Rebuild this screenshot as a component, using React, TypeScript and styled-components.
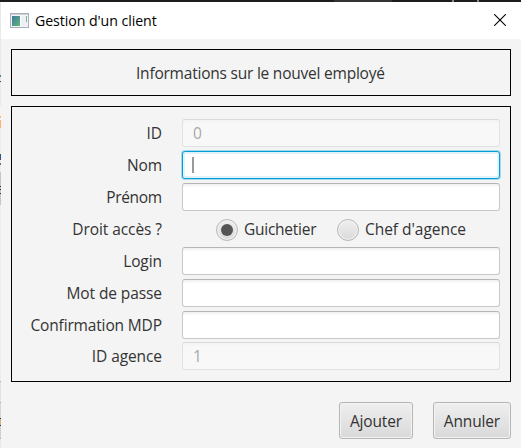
import React from "react";
import styled, { createGlobalStyle, css } from "styled-components";

const GlobalStyle = createGlobalStyle`
  * { box-sizing: border-box; }
  html, body { margin: 0; padding: 0; }
  body { overflow: hidden; background: #f4f4f4; }
`;

const Screen = styled.div`
  width: 521px;
  height: 448px;
  display: grid;
  grid-template: 2px 1fr / 1px 1fr;
  font-family: "Open Sans", "Segoe UI", sans-serif;
  font-size: 15.5px;
  line-height: 20px;
  color: #333;
`;

const TopEdge = styled.div`
  grid-column: 1 / 3;
  background: linear-gradient(
    90deg,
    #1f1c1f 334px,
    #353335 334px 392px,
    #1f1c1f 392px 452px,
    #8b898b 452px 454px,
    #1f1c1f 454px 477px,
    #8b898b 477px 479px,
    #1f1c1f 479px
  );
`;

const LeftEdge = styled.div`
  background: linear-gradient(
    #e9e9e9 73px,
    #4d80a0 73px 75px,
    #e9e9e9 75px 79px,
    #444 79px 80px,
    #e9e9e9 80px 104px,
    #f4f4f4 104px 114px,
    #ffb870 114px 116px,
    #f4f4f4 116px 118px,
    #ffb46b 118px 126px,
    #ececec 126px 152px,
    #753c35 152px 153px,
    #225c9d 153px 157px,
    #753c35 157px 158px,
    #ececec 158px 161px,
    #8c5b70 161px 163px,
    #ececec 163px 170px,
    #c6c6c6 170px 184px,
    #333 184px 185px,
    #c6c6c6 185px 187px,
    #333 187px 188px,
    #c6c6c6 188px 191px,
    #333 191px 192px,
    #c6c6c6 192px 203px,
    #ededed 203px 379px,
    #aaa 379px 380px,
    #e2e2e2 380px 400px,
    #aaa 400px 401px,
    #d7d7d7 401px 416px,
    #333 416px 417px,
    #d4b57d 417px 423px,
    #333 423px 424px,
    #d0d0d0 424px 436px,
    #aaa 436px 437px,
    #e9e9e9 437px
  );
`;

const Dialog = styled.main`
  display: flex;
  flex-direction: column;
  background: #f4f4f4;
`;

const TitleBar = styled.header`
  height: 37px;
  padding: 0 15px 0 9px;
  display: flex;
  align-items: center;
  background: #fff;
  color: #000;
`;

const Title = styled.h1`
  flex: 1;
  margin: 0 0 0 5px;
  font-size: 14.2px;
  font-weight: 400;
  line-height: 20px;
`;

const CloseButton = styled.button`
  width: 12px;
  height: 12px;
  margin-top: -2px;
  padding: 0;
  border: 0;
  background: none;
  svg { display: block; }
`;

const Content = styled.div`
  flex: 1;
  padding: 10px;
  display: flex;
  flex-direction: column;
`;

const Banner = styled.section`
  height: 47px;
  padding-right: 1px;
  border: 1px solid #000;
  display: flex;
  align-items: center;
  justify-content: center;
`;

const Form = styled.form`
  height: 276px;
  margin-top: 10px;
  padding: 12px 10px 0;
  border: 1px solid #000;
  display: grid;
  grid-template-columns: 140px 318px;
  grid-template-rows: repeat(6, 29px) 28px 28px;
  row-gap: 3px;
  column-gap: 20px;
`;

const Text = styled.span<{ $spacing?: number }>`
  white-space: nowrap;
  letter-spacing: ${(p) => p.$spacing ?? 0}px;
  margin-right: ${(p) => -(p.$spacing ?? 0)}px;
`;

const Label = styled.label`
  height: 28px;
  display: flex;
  align-items: center;
  justify-content: flex-end;
  &:nth-last-of-type(-n + 2) {
    height: 27px;
  }
`;

const Field = styled.div<{ $state?: "focused" | "disabled" }>`
  height: 28px;
  padding: 0 10px;
  display: flex;
  align-items: center;
  border: 1px solid #c8c8c8;
  border-top-color: #b5b5b5;
  border-radius: 3px;
  background: linear-gradient(#f1f1f1, #fff 4px);
  ${(p) =>
    p.$state === "disabled" &&
    css`
      color: #a8a8a8;
      border-color: #e2e2e2;
      border-top-color: #dadada;
      background: linear-gradient(#f3f3f3, #f8f8f8 4px);
    `}
  ${(p) =>
    p.$state === "focused" &&
    css`
      padding-left: 9px;
      border-color: #039ed3;
      background: #fff;
      box-shadow: 0 0 0 1px #a5d9ec, inset 0 0 0 2px #e1f2fa;
    `}
`;

const Caret = styled.i`
  width: 2px;
  height: 16px;
  background: #999;
`;

const Choices = styled.div`
  height: 28px;
  padding-left: 34px;
  display: flex;
  align-items: center;
`;

const Choice = styled.span<{ $width: number }>`
  width: ${(p) => p.$width}px;
  display: flex;
  align-items: center;
  gap: 6px;
`;

const Radio = styled.span<{ $selected?: boolean }>`
  flex: none;
  width: 22px;
  height: 22px;
  margin-top: 2px;
  border: 1px solid #b8b8b8;
  border-radius: 50%;
  display: grid;
  place-items: center;
  background: linear-gradient(#efefef, #dadada);
  box-shadow: inset 0 0 0 1px #f3f3f3;
  &::after {
    content: "";
    width: 12px;
    height: 12px;
    border-radius: 50%;
    background: ${(p) => (p.$selected ? "#555" : "transparent")};
  }
`;

const Actions = styled.footer`
  margin-top: 20px;
  display: flex;
  justify-content: flex-end;
  gap: 20px;
`;

const Button = styled.button<{ $width: number }>`
  width: ${(p) => p.$width}px;
  height: 37px;
  padding: 0;
  display: flex;
  align-items: center;
  justify-content: center;
  border: 1px solid #b5b5b5;
  border-radius: 3px;
  background: linear-gradient(#efefef, #d9d9d9);
  box-shadow: inset 0 0 0 1px #f3f3f3;
  font: inherit;
  color: #333;
`;

const AppIcon = () => (
  <svg width="20" height="16" viewBox="0 0 20 16" shapeRendering="crispEdges">
    <defs>
      <linearGradient id="pane" x1="0" y1="0" x2="1" y2="1">
        <stop offset="0" stopColor="#3e78a0" />
        <stop offset="1" stopColor="#5fb878" />
      </linearGradient>
    </defs>
    <rect x="0.5" y="0.5" width="18" height="14" fill="#f4f5f7" stroke="#a9afb9" />
    <rect x="1" y="1" width="17" height="1" fill="#cdd2da" />
    <rect x="2" y="3" width="8" height="10" fill="url(#pane)" />
    <rect x="10" y="3" width="1" height="10" fill="#fff" />
    <rect x="11" y="3" width="6" height="10" fill="#eef0f3" />
    <rect x="16" y="3" width="1" height="6" fill="#70b795" />
  </svg>
);

const CloseIcon = () => (
  <svg width="12" height="12" viewBox="0 0 12 12">
    <path d="M0.2 0.2 11.8 11.8M11.8 0.2 0.2 11.8" stroke="#000" strokeWidth="1.1" fill="none" />
  </svg>
);

type Row = {
  label: string;
  spacing: number;
  kind?: "choice";
  state?: "focused" | "disabled";
  value?: string;
};

const rows: Row[] = [
  { label: "ID", spacing: 0, state: "disabled", value: "0" },
  { label: "Nom", spacing: -0.2, state: "focused" },
  { label: "Prénom", spacing: -0.35 },
  { label: "Droit accès ?", spacing: -0.08, kind: "choice" },
  { label: "Login", spacing: -0.1 },
  { label: "Mot de passe", spacing: -0.1 },
  { label: "Confirmation MDP", spacing: -0.15 },
  { label: "ID agence", spacing: -0.1, state: "disabled", value: "1" },
];

export default function App() {
  return (
    <Screen>
      <GlobalStyle />
      <TopEdge />
      <LeftEdge />
      <Dialog>
        <TitleBar>
          <AppIcon />
          <Title>
            <Text $spacing={-0.08}>Gestion d'un client</Text>
          </Title>
          <CloseButton type="button" aria-label="Fermer">
            <CloseIcon />
          </CloseButton>
        </TitleBar>
        <Content>
          <Banner>
            <Text $spacing={-0.22}>Informations sur le nouvel employé</Text>
          </Banner>
          <Form>
            {rows.map((row) => (
              <React.Fragment key={row.label}>
                <Label>
                  <Text $spacing={row.spacing}>{row.label}</Text>
                </Label>
                {row.kind === "choice" ? (
                  <Choices>
                    <Choice $width={121}>
                      <Radio $selected />
                      <Text $spacing={-0.25}>Guichetier</Text>
                    </Choice>
                    <Choice $width={140}>
                      <Radio />
                      <Text $spacing={-0.04}>Chef d'agence</Text>
                    </Choice>
                  </Choices>
                ) : (
                  <Field $state={row.state}>
                    {row.state === "focused" ? <Caret /> : row.value}
                  </Field>
                )}
              </React.Fragment>
            ))}
          </Form>
          <Actions>
            <Button type="button" $width={74}>
              <Text $spacing={-0.15}>Ajouter</Text>
            </Button>
            <Button type="button" $width={78}>
              <Text $spacing={-0.15}>Annuler</Text>
            </Button>
          </Actions>
        </Content>
      </Dialog>
    </Screen>
  );
}
